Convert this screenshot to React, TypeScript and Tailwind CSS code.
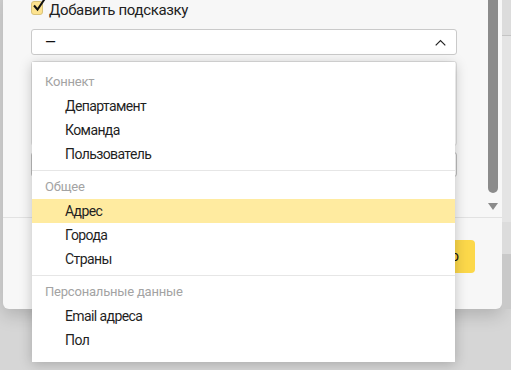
const groups = [
  { title: "Коннект", items: ["Департамент", "Команда", "Пользователь"] },
  { title: "Общее", items: ["Адрес", "Города", "Страны"] },
  { title: "Персональные данные", items: ["Email адреса", "Пол"] },
];

function Dropdown() {
  return (
    <div className="absolute left-[32px] top-[62px] w-[423px] bg-white pt-1 pb-1.5 shadow-[0_2px_12px_rgba(0,0,0,0.22)]">
      {groups.map((g, gi) => (
        <div
          key={g.title}
          className={gi < groups.length - 1 ? "pb-1 border-b border-[#e6e6e6]" : "pb-1"}
        >
          <div className="h-[28px] pt-2 pl-[13px] text-[13px] leading-4 tracking-[-0.2px] text-[#a3a3a3]">
            {g.title}
          </div>
          {g.items.map((item) => (
            <div
              key={item}
              className={
                "h-6 pl-[33px] flex items-center text-[14px] tracking-[-0.6px] text-[#1f1f1f] " +
                (item === "Адрес" ? "bg-[#ffeba0]" : "")
              }
            >
              {item}
            </div>
          ))}
        </div>
      ))}
    </div>
  );
}

export default function App() {
  return (
    <div
      className="relative w-[511px] h-[370px] overflow-hidden bg-[#d6d6d6]"
      style={{ fontFamily: "Roboto, 'Liberation Sans', sans-serif" }}
    >
      <div className="flex">
        <div className="ml-[3px] -mt-[12px] w-[499px] bg-[#f7f7f7] rounded-b-md shadow-[0_6px_18px_rgba(0,0,0,0.18)]">
          <div className="flex h-[229px]">
            <div className="flex-1 pl-[28px] pr-[31px] pt-[12px]">
              <div className="flex items-center gap-[6px] h-5">
                <div className="relative w-[12px] h-[14px] -mt-[4px] rounded-[3px] bg-[#fde38f] border border-[#d8c27a]">
                  <svg
                    viewBox="0 0 16 16"
                    className="absolute -left-[1px] -top-[5px] w-[16px] h-[16px]"
                  >
                    <path
                      d="M3 8.5 L6.5 12.5 L14 1.5"
                      fill="none"
                      stroke="#111"
                      strokeWidth="2"
                    />
                  </svg>
                </div>
                <span className="text-[15px] tracking-[-0.35px] text-[#222]">
                  Добавить подсказку
                </span>
              </div>
              <div className="mt-[9px] h-[26px] bg-white border border-[#cacaca] rounded-[3px] flex items-center justify-between pl-[13px] pr-[10px]">
                <span className="text-[14px] text-[#111]">—</span>
                <svg viewBox="0 0 11 7" className="w-[11px] h-[7px]">
                  <path d="M0.7 6.3 L5.5 1.5 L10.3 6.3" fill="none" stroke="#222" strokeWidth="1.2" />
                </svg>
              </div>
              <div className="mt-[6px] h-[85px] bg-white border border-[#dedede] rounded-[3px]" />
              <div className="mt-[6px] h-[25px] bg-white border border-[#bdbdbd] rounded-[3px]" />
            </div>
            <div className="w-[10px] mr-[4px] flex flex-col items-center">
              <div className="w-[10px] h-[205px] bg-[#8b8b8b] rounded-b-full" />
              <svg viewBox="0 0 10 7" className="mt-[10px] w-[10px] h-[7px]">
                <path d="M0 0 H10 L5 7 Z" fill="#8b8b8b" />
              </svg>
            </div>
          </div>
          <div className="h-[77px] border-t border-[#e2e2e2] flex items-center justify-end pr-[27px]">
            <button className="h-[33px] px-4 rounded-[4px] bg-[#fcd84a] text-[14px] text-[#111]">
              Готово
            </button>
          </div>
        </div>
        <div className="flex-1 flex flex-col">
          <div className="h-[36px] bg-[#dcdcdc] border-b border-[#c4c4c4]" />
          <div className="h-[186px] bg-[#e4e4e4]" />
          <div className="h-[32px] bg-[#dcdcdc]" />
          <div className="h-[55px] bg-[#c9c9c9]" />
        </div>
      </div>
      <Dropdown />
    </div>
  );
}
